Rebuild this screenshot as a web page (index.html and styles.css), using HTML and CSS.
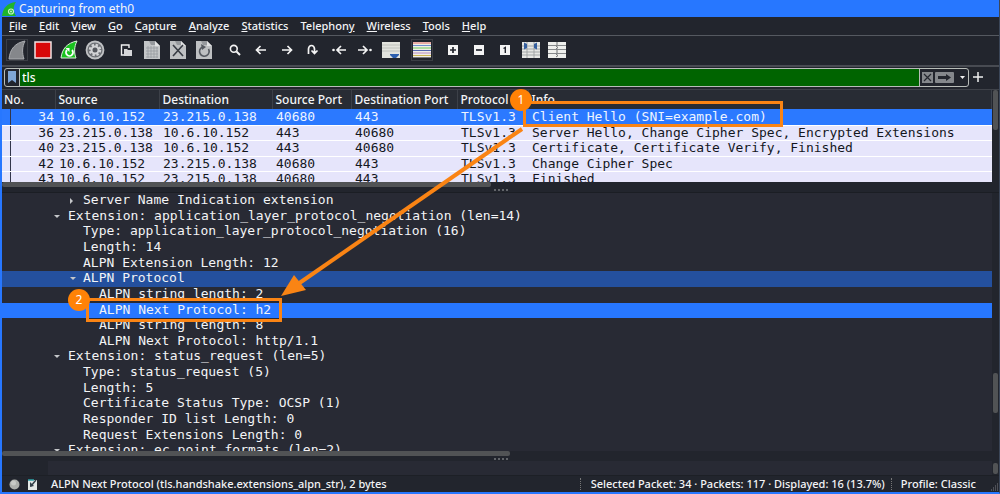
FILE: index.html
```html
<!DOCTYPE html>
<html lang="en">
<head>
<meta charset="utf-8">
<title>Capturing from eth0</title>
<link rel="stylesheet" href="styles.css">
</head>
<body>
<div class="window">
  <header class="titlebar">
    <svg class="app-icon" width="14" height="14" viewBox="0 0 14 14"><path d="M0 14C1 6 5 1 14 0C11 4 11 9 14 14Z" fill="#1fb52a"/><circle cx="9" cy="9.500" r="2.500" fill="none" stroke="#c9f5c4" stroke-width="1.200"/><circle cx="9" cy="9.500" r="1" fill="#c9f5c4"/></svg>
    <h1 class="title">Capturing from eth0</h1>
  </header>

  <nav class="menubar">
    <button class="menu"><u>F</u>ile</button>
    <button class="menu"><u>E</u>dit</button>
    <button class="menu"><u>V</u>iew</button>
    <button class="menu"><u>G</u>o</button>
    <button class="menu"><u>C</u>apture</button>
    <button class="menu"><u>A</u>nalyze</button>
    <button class="menu"><u>S</u>tatistics</button>
    <button class="menu">Telephon<u>y</u></button>
    <button class="menu"><u>W</u>ireless</button>
    <button class="menu"><u>T</u>ools</button>
    <button class="menu"><u>H</u>elp</button>
  </nav>

  <div class="toolbar">
    <button class="tool framed" aria-label="Start capture"><svg viewBox="0 0 20 20"><path d="M2 19C3 9 8 3 18 1C15 7 15 13 17 19Z" fill="#85878b" stroke="#aaacb0"/></svg></button>
    <button class="tool" aria-label="Stop capture"><svg viewBox="0 0 20 20"><rect x="2" y="2" width="16" height="16" fill="#d80808" stroke="#f2e4e4" stroke-width="1.500"/></svg></button>
    <button class="tool" aria-label="Restart capture"><svg viewBox="0 0 20 20"><path d="M2 18C3 9 8 3 18 1C15 7 15 13 17 18Z" fill="#19c21e" stroke="#d9f5d9"/><path d="M8 10A3.500 3.500 0 1 0 13 10" fill="none" stroke="#fff" stroke-width="1.800"/><path d="M6.500 8H10.500V12Z" fill="#fff"/></svg></button>
    <button class="tool" aria-label="Capture options"><svg viewBox="0 0 20 20"><circle cx="10" cy="10" r="8.500" fill="#6d7075" stroke="#c0c2c4" stroke-width="1.800"/><circle cx="10" cy="10" r="5" fill="none" stroke="#d2d3d5" stroke-width="2.500" stroke-dasharray="2.300 1.630"/><circle cx="10" cy="10" r="3.500" fill="#55585e" stroke="#d2d3d5" stroke-width="2"/></svg></button>
    <i class="gap"></i>
    <button class="tool" aria-label="Open file"><svg viewBox="0 0 20 20"><path d="M9 15H5.500V5H13V8" fill="none" stroke="#f0f0f0" stroke-width="1.400"/><path d="M8 9h3l1 1h4v6H8Z" fill="#d5d6d8"/></svg></button>
    <button class="tool" aria-label="Save file"><svg viewBox="0 0 20 20"><path d="M2 1H13L18 6V19H2Z" fill="#c4c6c8"/><path d="M7 1H13V5H9Z" fill="#96999d"/><path d="M13 1V6H18Z" fill="#e2e3e4"/><path d="M4 8H16M4 11H16M4 14H16M4 17H16M6 6V18M9 6V18M12 6V18M15 7V18" stroke="#94979b" stroke-width=".700"/></svg></button>
    <button class="tool" aria-label="Close file"><svg viewBox="0 0 20 20"><path d="M2 1H13L18 6V19H2Z" fill="#bec0c2"/><path d="M7 1H13V5H9Z" fill="#96999d"/><path d="M13 1V6H18Z" fill="#e2e3e4"/><path d="M5 5L15 16M15 5L5 16" stroke="#383c44" stroke-width="1.600"/></svg></button>
    <button class="tool" aria-label="Reload file"><svg viewBox="0 0 20 20"><path d="M2 1H13L18 6V19H2Z" fill="#bec0c2"/><path d="M7 1H13V5H9Z" fill="#96999d"/><path d="M13 1V6H18Z" fill="#e2e3e4"/><path d="M14.500 9A4.800 4.800 0 1 1 8 7.200" fill="none" stroke="#555960" stroke-width="1.600"/><path d="M7 4L12 7L8 10Z" fill="#555960"/></svg></button>
    <i class="gap"></i>
    <button class="tool" aria-label="Find"><svg viewBox="0 0 20 20"><circle cx="8.800" cy="8.800" r="3.400" fill="none" stroke="#f4f4f4" stroke-width="1.600"/><path d="M11.500 11.500L15 15" stroke="#f4f4f4" stroke-width="2"/></svg></button>
    <button class="tool" aria-label="Previous packet"><svg viewBox="0 0 20 20"><path d="M15 10H6M9.500 6L5.500 10L9.500 14" class="line"/></svg></button>
    <button class="tool" aria-label="Next packet"><svg viewBox="0 0 20 20"><path d="M5 10H14M10.500 6L14.500 10L10.500 14" class="line"/></svg></button>
    <button class="tool" aria-label="Go to packet"><svg viewBox="0 0 20 20"><path d="M5.500 14V9A3 3.500 0 0 1 11.500 9V13M8.500 10.500L11.500 13.500L14.500 10.500" class="line"/></svg></button>
    <button class="tool" aria-label="First packet"><svg viewBox="0 0 20 20"><path d="M17 10H9M12 6L8 10L12 14" class="line"/><circle cx="4.500" cy="10" r="1.300" fill="#f4f4f4"/></svg></button>
    <button class="tool" aria-label="Last packet"><svg viewBox="0 0 20 20"><path d="M3 10H11M8 6L12 10L8 14" class="line"/><circle cx="15.500" cy="10" r="1.300" fill="#f4f4f4"/></svg></button>
    <button class="tool" aria-label="Auto scroll"><svg viewBox="0 0 20 20"><path d="M1 2H19V18H1Z" fill="#e2e3de"/><path d="M1 5H19M1 8H19M1 11H19" stroke="#b8bab4" stroke-width=".800"/><path d="M9 14H18V15L15 18H12L9 15Z" fill="#2d5fae"/></svg></button>
    <i class="gap"></i>
    <button class="tool framed" aria-label="Colorize"><svg viewBox="0 0 20 20"><path d="M1 2H19V18H1Z" fill="#f0efe6"/><path d="M1 3H19" stroke="#e36a66"/><path d="M1 5.500H19" stroke="#6f8fd0"/><path d="M1 8H19" stroke="#6cc85c"/><path d="M1 10.500H19" stroke="#5467b0"/><path d="M1 13H19" stroke="#b88cc2"/><path d="M1 15.500H19" stroke="#ccb655"/><path d="M1 17.500H19" stroke="#777"/></svg></button>
    <i class="gap"></i>
    <button class="tool" aria-label="Zoom in"><svg viewBox="0 0 20 20"><path d="M5 5H15V15H5Z" fill="#f4f4f4"/><path d="M7 10H13M10 7V13" stroke="#22252d" stroke-width="1.700"/></svg></button>
    <button class="tool" aria-label="Zoom out"><svg viewBox="0 0 20 20"><path d="M5 5H15V15H5Z" fill="#f4f4f4"/><path d="M7 10H13" stroke="#22252d" stroke-width="1.700"/></svg></button>
    <button class="tool" aria-label="Normal size"><svg viewBox="0 0 20 20"><path d="M5 5H15V15H5Z" fill="#f4f4f4"/><path d="M8.500 8.500L10.300 7.500V13" fill="none" stroke="#22252d" stroke-width="1.400"/></svg></button>
    <button class="tool" aria-label="Resize columns"><svg viewBox="0 0 20 20"><path d="M1 2H19V18H1Z" fill="#e6e7e4"/><path d="M1 6H19M1 9H19M1 12H19M1 15H19M6 2V18M13 2V18" stroke="#9da0a2" stroke-width=".900"/><path d="M3 2.500L6 4V8L3 9.500ZM16 2.500L13 4V8L16 9.500Z" fill="#355f9e"/></svg></button>
    <button class="tool" aria-label="Reset layout"><svg viewBox="0 0 20 20"><path d="M1 2H19V18H1Z" fill="#eeefec"/><path d="M1 5.500H19M1 9.500H19M1 13.500H19" stroke="#85888a"/><path d="M10 2V5M9 6L11 7.500L9 9M10 10V13M9 14L11 15.500L9 17" fill="none" stroke="#6d7072"/></svg></button>
  </div>

  <form class="filterbar">
    <div class="filter">
      <button type="button" class="bookmark" aria-label="Bookmark filter"><svg width="8" height="12" viewBox="0 0 8 12"><path d="M0 0H8V12L4 9L0 12Z" fill="#7fa6d6"/></svg></button>
      <input class="query" type="text" value="tls" aria-label="Display filter">
      <button type="button" class="clear" aria-label="Clear filter"><svg width="11" height="11" viewBox="0 0 11 11"><path d="M0 0H11V11H0Z" fill="#85888c"/><path d="M2 2L9 9M9 2L2 9" stroke="#24272e" stroke-width="1.200"/></svg></button>
      <button type="button" class="apply" aria-label="Apply filter"><svg width="19" height="11" viewBox="0 0 19 11"><rect width="19" height="11" rx="1" fill="#85888c"/><path d="M3 4H11V2L16 5.500L11 9V7H3Z" fill="#24272e"/></svg></button>
      <button type="button" class="recent" aria-label="Recent filters"><svg width="5" height="3" viewBox="0 0 5 3"><path d="M0 0H5L2.500 3Z" fill="#f0f0f0"/></svg></button>
    </div>
    <button type="button" class="add" aria-label="Add filter button"><svg width="10" height="10" viewBox="0 0 10 10"><path d="M0 5H10M5 0V10" stroke="#eee" stroke-width="1.500"/></svg></button>
  </form>

  <section class="packets">
    <div class="packet-view">
      <table class="packet-table">
        <colgroup><col class="c-no"><col class="c-src"><col class="c-dst"><col class="c-sport"><col class="c-dport"><col class="c-proto"><col></colgroup>
        <thead><tr><th>No.</th><th>Source</th><th>Destination</th><th>Source Port</th><th>Destination Port</th><th>Protocol</th><th>Info</th></tr></thead>
        <tbody>
          <tr class="current"><td>34</td><td>10.6.10.152</td><td>23.215.0.138</td><td>40680</td><td>443</td><td>TLSv1.3</td><td>Client Hello (SNI=example.com)</td></tr>
          <tr><td>36</td><td>23.215.0.138</td><td>10.6.10.152</td><td>443</td><td>40680</td><td>TLSv1.3</td><td>Server Hello, Change Cipher Spec, Encrypted Extensions</td></tr>
          <tr><td>40</td><td>23.215.0.138</td><td>10.6.10.152</td><td>443</td><td>40680</td><td>TLSv1.3</td><td>Certificate, Certificate Verify, Finished</td></tr>
          <tr><td>42</td><td>10.6.10.152</td><td>23.215.0.138</td><td>40680</td><td>443</td><td>TLSv1.3</td><td>Change Cipher Spec</td></tr>
          <tr><td>43</td><td>10.6.10.152</td><td>23.215.0.138</td><td>40680</td><td>443</td><td>TLSv1.3</td><td>Finished</td></tr>
        </tbody>
      </table>
    </div>
    <div class="vscroll"><i class="thumb"></i></div>
  </section>
  <div class="hscroll"><i class="thumb packets-thumb"></i></div>
  <div class="splitter"><i class="grip"></i></div>

  <section class="details">
    <ul class="tree">
      <li class="l2 closed">Server Name Indication extension</li>
      <li class="l1 open">Extension: application_layer_protocol_negotiation (len=14)</li>
      <li class="l2">Type: application_layer_protocol_negotiation (16)</li>
      <li class="l2">Length: 14</li>
      <li class="l2">ALPN Extension Length: 12</li>
      <li class="l2 open parent">ALPN Protocol</li>
      <li class="l3">ALPN string length: 2</li>
      <li class="l3 current">ALPN Next Protocol: h2</li>
      <li class="l3">ALPN string length: 8</li>
      <li class="l3">ALPN Next Protocol: http/1.1</li>
      <li class="l1 open">Extension: status_request (len=5)</li>
      <li class="l2">Type: status_request (5)</li>
      <li class="l2">Length: 5</li>
      <li class="l2">Certificate Status Type: OCSP (1)</li>
      <li class="l2">Responder ID list Length: 0</li>
      <li class="l2">Request Extensions Length: 0</li>
      <li class="l1 open">Extension: ec_point_formats (len=2)</li>
    </ul>
    <div class="vscroll details-scroll"><i class="thumb"></i></div>
  </section>
  <div class="hscroll"><i class="thumb details-thumb"></i></div>
  <div class="splitter"><i class="grip"></i></div>

  <section class="bytes"><div class="bytes-view"></div><div class="vscroll"><i class="thumb bytes-thumb"></i></div></section>

  <footer class="statusbar">
    <button class="status-icon" aria-label="Expert information"><svg width="11" height="11" viewBox="0 0 11 11"><circle cx="5.500" cy="5.500" r="5" fill="#aeb0ac"/><circle cx="4.500" cy="4" r="2.500" fill="#c8cac6"/></svg></button>
    <button class="status-icon" aria-label="Capture comment"><svg width="11" height="11" viewBox="0 0 11 11"><path d="M1 1H10V11H1Z" fill="#e4e8e6"/><path d="M3 3L3 8L7 7Z" fill="#34414a"/><path d="M4 7L9 1" stroke="#34414a" stroke-width="1.500"/><path d="M1 1H7" stroke="#2fa3a8" stroke-width="1.500"/></svg></button>
    <span class="field-info">ALPN Next Protocol (tls.handshake.extensions_alpn_str), 2 bytes</span>
    <span class="counts">Selected Packet: 34 · Packets: 117 · Displayed: 16 (13.7%)</span>
    <span class="profile">Profile: Classic</span>
    <svg class="size-grip" width="9" height="9" viewBox="0 0 9 9"><path d="M7 1H9M5 3H9M3 5H9M1 7H9" stroke="#7a7d82" stroke-dasharray="1 1"/></svg>
  </footer>
</div>

<svg class="callouts" width="1000" height="494" viewBox="0 0 1000 494">
  <g fill="none" stroke="#fa8414" stroke-width="3">
    <path d="M524.500 102.500H781.500V125.500H524.500Z"/>
    <path d="M87.500 299.500H280.500V320.500H87.500Z"/>
    <path d="M522 129L298 284" stroke-width="4"/>
  </g>
  <path d="M281 296L294 275L306 290Z" fill="#fa8414"/>
  <circle cx="521" cy="100" r="11" fill="#ff8206"/>
  <circle cx="79" cy="300" r="11" fill="#ff8206"/>
  <text x="521" y="104">1</text>
  <text x="79" y="304">2</text>
</svg>
</body>
</html>
```
FILE: styles.css
```css
* { box-sizing: border-box; }

body {
  margin: 0;
  background: #22252d;
  color: #f3f4f6;
  font-family: "Noto Sans", sans-serif;
  font-size: 11px;
  font-weight: 500;
}

button {
  margin: 0;
  padding: 0;
  border: 0;
  background: none;
  color: inherit;
  font: inherit;
}

svg { display: block; }

.window {
  display: flex;
  flex-direction: column;
  height: 100vh;
  border: solid #2777ff;
  border-width: 0 1px 2px 2px;
  border-right-color: #3b4658;
}

.titlebar {
  display: flex;
  align-items: center;
  gap: 3px;
  height: 17px;
  background: #2777ff;
}

.title {
  margin: 0;
  font-size: 12px;
  font-weight: 400;
  line-height: 16px;
}

.menubar {
  display: flex;
  align-items: center;
  gap: 12px;
  height: 19px;
  padding-left: 7px;
  border-bottom: 1px solid #555960;
}

.menu { line-height: 18px; }

.toolbar {
  display: flex;
  align-items: center;
  height: 31px;
  padding: 0 0 1px 2px;
  border-bottom: 2px solid #484b52;
}

.tool {
  display: flex;
  align-items: center;
  justify-content: center;
  width: 22px;
  height: 22px;
  margin: 0 2px;
  border: 1px solid transparent;
}

.tool.framed { border-color: #3b3e45; }
.tool svg { width: 20px; height: 20px; flex: none; }

.line {
  fill: none;
  stroke: #f4f4f4;
  stroke-width: 1.7;
}

.gap { width: 5px; }

.filterbar {
  display: flex;
  align-items: center;
  gap: 4px;
  height: 23px;
  margin: 0;
  padding: 0 16px 2px 2px;
  border-bottom: 1px solid #3f4249;
}

.filter {
  flex: 1;
  display: flex;
  align-items: center;
  height: 19px;
  border: 1px solid #b9bdb9;
  border-radius: 3px;
}

.bookmark {
  display: flex;
  justify-content: center;
  width: 14px;
}

.query {
  flex: 1;
  align-self: stretch;
  min-width: 0;
  margin: 0 2px 0 0;
  padding: 0 2px;
  border: solid #b9bdb9;
  border-width: 0 1px;
  outline: 0;
  background: #006400;
  color: #fff;
  font: inherit;
  font-size: 12px;
}

.clear { margin-right: 2px; }
.recent { margin: 0 3px 0 6px; }

.packets { display: flex; }

.packet-view {
  flex: 1;
  height: 92px;
  overflow: hidden;
  background: #282c34;
}

.packet-table {
  width: 100%;
  table-layout: fixed;
  border-collapse: collapse;
}

.c-no { width: 53px; }
.c-src { width: 104px; }
.c-dst { width: 113px; }
.c-sport { width: 79px; }
.c-dport { width: 106px; }
.c-proto { width: 71px; }

.packet-table th {
  height: 19px;
  padding: 0 3px;
  border-right: 1px solid #3c4048;
  font-size: 12px;
  font-weight: 500;
  line-height: 17px;
  text-align: left;
  white-space: nowrap;
}

.packet-table th:first-child { padding-left: 2px; }

.packet-table td {
  height: 16px;
  padding: 0 0 1px 4px;
  border-bottom: 1px solid #fff;
  background: #e6e5fb;
  color: #14171e;
  font: 13px/13px "DejaVu Sans Mono", monospace;
  white-space: nowrap;
}

.packet-table tr:nth-child(even) td { height: 15px; }

.packet-table td:first-child {
  padding: 0 1px 1px 0;
  text-align: right;
  background: linear-gradient(#33364a, #33364a) 8px 0 / 1px 100% no-repeat #e6e5fb;
}

.packet-table .current td,
.packet-table .current td:first-child {
  background-color: #2b79ff;
  color: #eef4ff;
}

.vscroll {
  width: 7px;
  padding-left: 1px;
  background: #22252d;
}

.thumb {
  display: block;
  border-radius: 2px;
  background: #515355;
}

.vscroll .thumb { width: 5px; height: 40px; }

.hscroll { height: 5px; }
.hscroll .thumb { height: 5px; }
.packets-thumb { width: 49%; }
.details-thumb { width: 51%; }

.splitter {
  display: flex;
  align-items: center;
  justify-content: center;
  height: 5px;
}

.grip { width: 14px; border-top: 2px dotted #62656a; }

.details {
  flex: 1;
  display: flex;
  min-height: 0;
  overflow: hidden;
  border-top: 1px solid #1b1e24;
  background: #282a34;
}

.tree {
  flex: 1;
  display: grid;
  grid-auto-rows: 1fr;
  margin: 0 0 -8px;
  padding: 0;
  list-style: none;
  font: 13px/14px "DejaVu Sans Mono", monospace;
  white-space: nowrap;
}

.tree li { position: relative; min-height: 0; }
.l1 { padding-left: 66px; }
.l2 { padding-left: 81px; }
.l3 { padding-left: 97px; }
.parent { background: #24509e; }
.tree .current { background: #2777ff; }

.open::before,
.closed::before {
  content: "";
  position: absolute;
  top: 6px;
  border: 3px solid transparent;
}

.open::before { border-top-color: #c5c7ca; }
.closed::before { top: 5px; border-left-color: #c5c7ca; }
.l1::before { left: 52px; }
.l2::before { left: 68px; }

.details-scroll { padding-top: 180px; }

.bytes { display: flex; height: 14px; }
.bytes-view { flex: 1; margin-left: 46px; background: #282a34; }
.vscroll .bytes-thumb { height: 11px; margin-top: 2px; }

.statusbar {
  display: flex;
  align-items: center;
  height: 17px;
  padding: 0 0 0 7px;
  border-top: 1px solid #1d2026;
  line-height: 16px;
  white-space: nowrap;
}

.status-icon { margin-right: 7px; }
.field-info { flex: 1; margin-left: 6px; }

.counts {
  padding: 0 6px 0 10px;
  border: dotted #777;
  border-width: 0 1px;
  line-height: 12px;
}

.profile { margin: 0 14px 0 9px; }
.size-grip { align-self: flex-end; }

.callouts {
  position: absolute;
  top: 0;
  left: 0;
  pointer-events: none;
}

.callouts text {
  fill: #fff;
  font-size: 12px;
  font-weight: 400;
  text-anchor: middle;
}
```
